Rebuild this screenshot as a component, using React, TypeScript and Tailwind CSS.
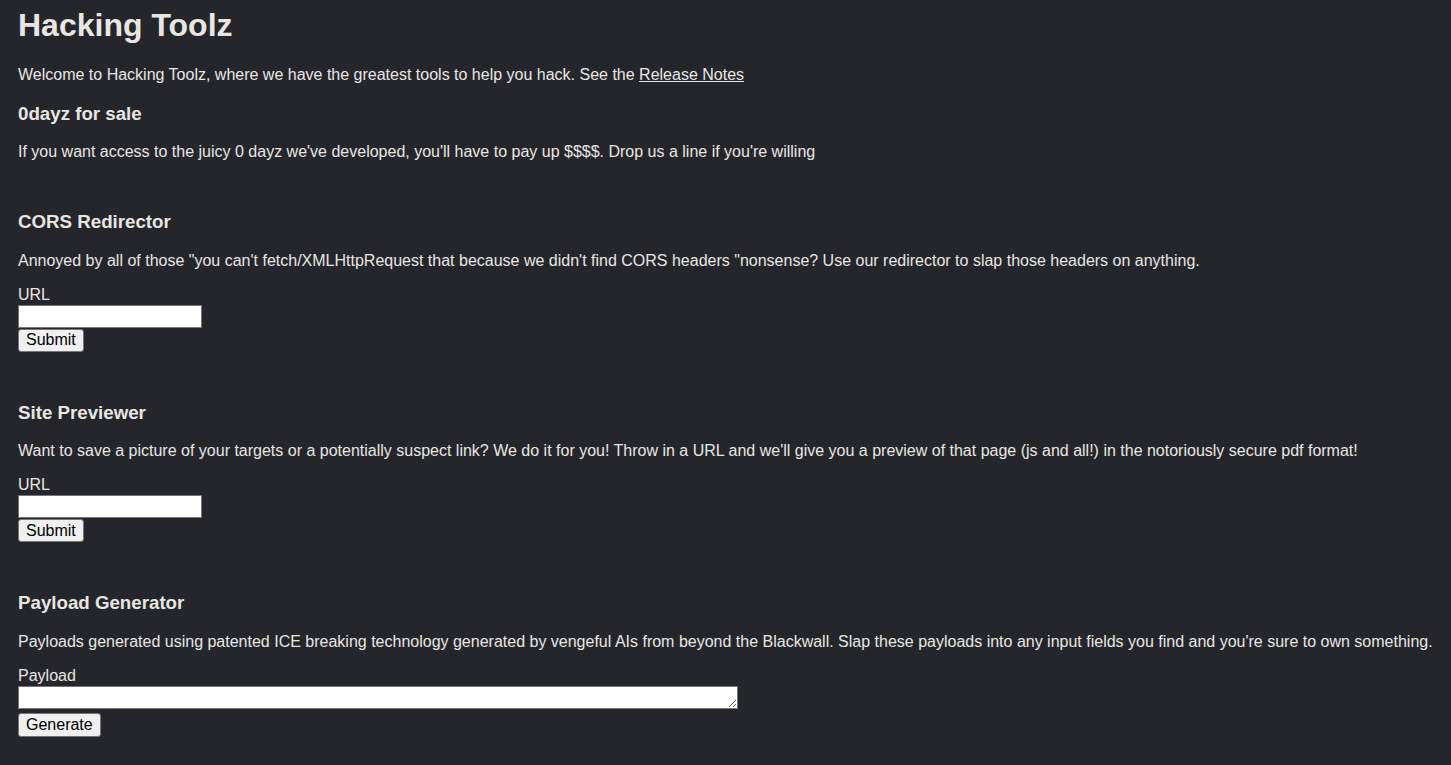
function Tool({
  title,
  text,
  label,
  children,
}: {
  title: string;
  text: string;
  label: string;
  children: React.ReactNode;
}) {
  return (
    <section className="mt-[50px]">
      <h3 className="text-[18.72px] font-bold">{title}</h3>
      <p className="mt-[18.6px]">{text}</p>
      <label className="block mt-[16px]">{label}</label>
      {children}
    </section>
  );
}

function UrlForm() {
  return (
    <form onSubmit={(e) => e.preventDefault()}>
      <input
        type="text"
        className="block mt-px w-[184px] h-[23px] bg-white border border-[#767676] text-black px-[2px]"
      />
      <button className="block mt-px h-[23px] px-[7px] bg-[#efefef] border border-[#767676] rounded-[3px] text-black">
        Submit
      </button>
    </form>
  );
}

export default function App() {
  return (
    <div className="min-h-screen bg-[#25262b] text-[#e8e6e3] font-['Liberation_Sans',Arial,sans-serif] text-[16px] leading-[normal] px-[18px] pt-[7px] pb-[28px]">
      <h1 className="text-[32px] font-bold leading-[37px]">Hacking Toolz</h1>
      <p className="mt-[22px]">
        Welcome to Hacking Toolz, where we have the greatest tools to help you
        hack. See the{" "}
        <a href="#" className="underline">
          Release Notes
        </a>
      </p>

      <h3 className="mt-[19px] text-[18.72px] font-bold">0dayz for sale</h3>
      <p className="mt-[18px]">
        If you want access to the juicy 0 dayz we've developed, you'll have to
        pay up $$$$. Drop us a line if you're willing
      </p>

      <Tool
        title="CORS Redirector"
        text={`Annoyed by all of those "you can't fetch/XMLHttpRequest that because we didn't find CORS headers "nonsense? Use our redirector to slap those headers on anything.`}
        label="URL"
      >
        <UrlForm />
      </Tool>

      <Tool
        title="Site Previewer"
        text="Want to save a picture of your targets or a potentially suspect link? We do it for you! Throw in a URL and we'll give you a preview of that page (js and all!) in the notoriously secure pdf format!"
        label="URL"
      >
        <UrlForm />
      </Tool>

      <Tool
        title="Payload Generator"
        text="Payloads generated using patented ICE breaking technology generated by vengeful AIs from beyond the Blackwall. Slap these payloads into any input fields you find and you're sure to own something."
        label="Payload"
      >
        <form onSubmit={(e) => e.preventDefault()}>
          <textarea
            rows={1}
            className="block mt-px w-[720px] h-[23px] bg-white border border-[#767676] text-black resize"
          />
          <button className="block mt-[4px] h-[24px] px-[7px] bg-[#efefef] border border-[#767676] rounded-[3px] text-black">
            Generate
          </button>
        </form>
      </Tool>
    </div>
  );
}
